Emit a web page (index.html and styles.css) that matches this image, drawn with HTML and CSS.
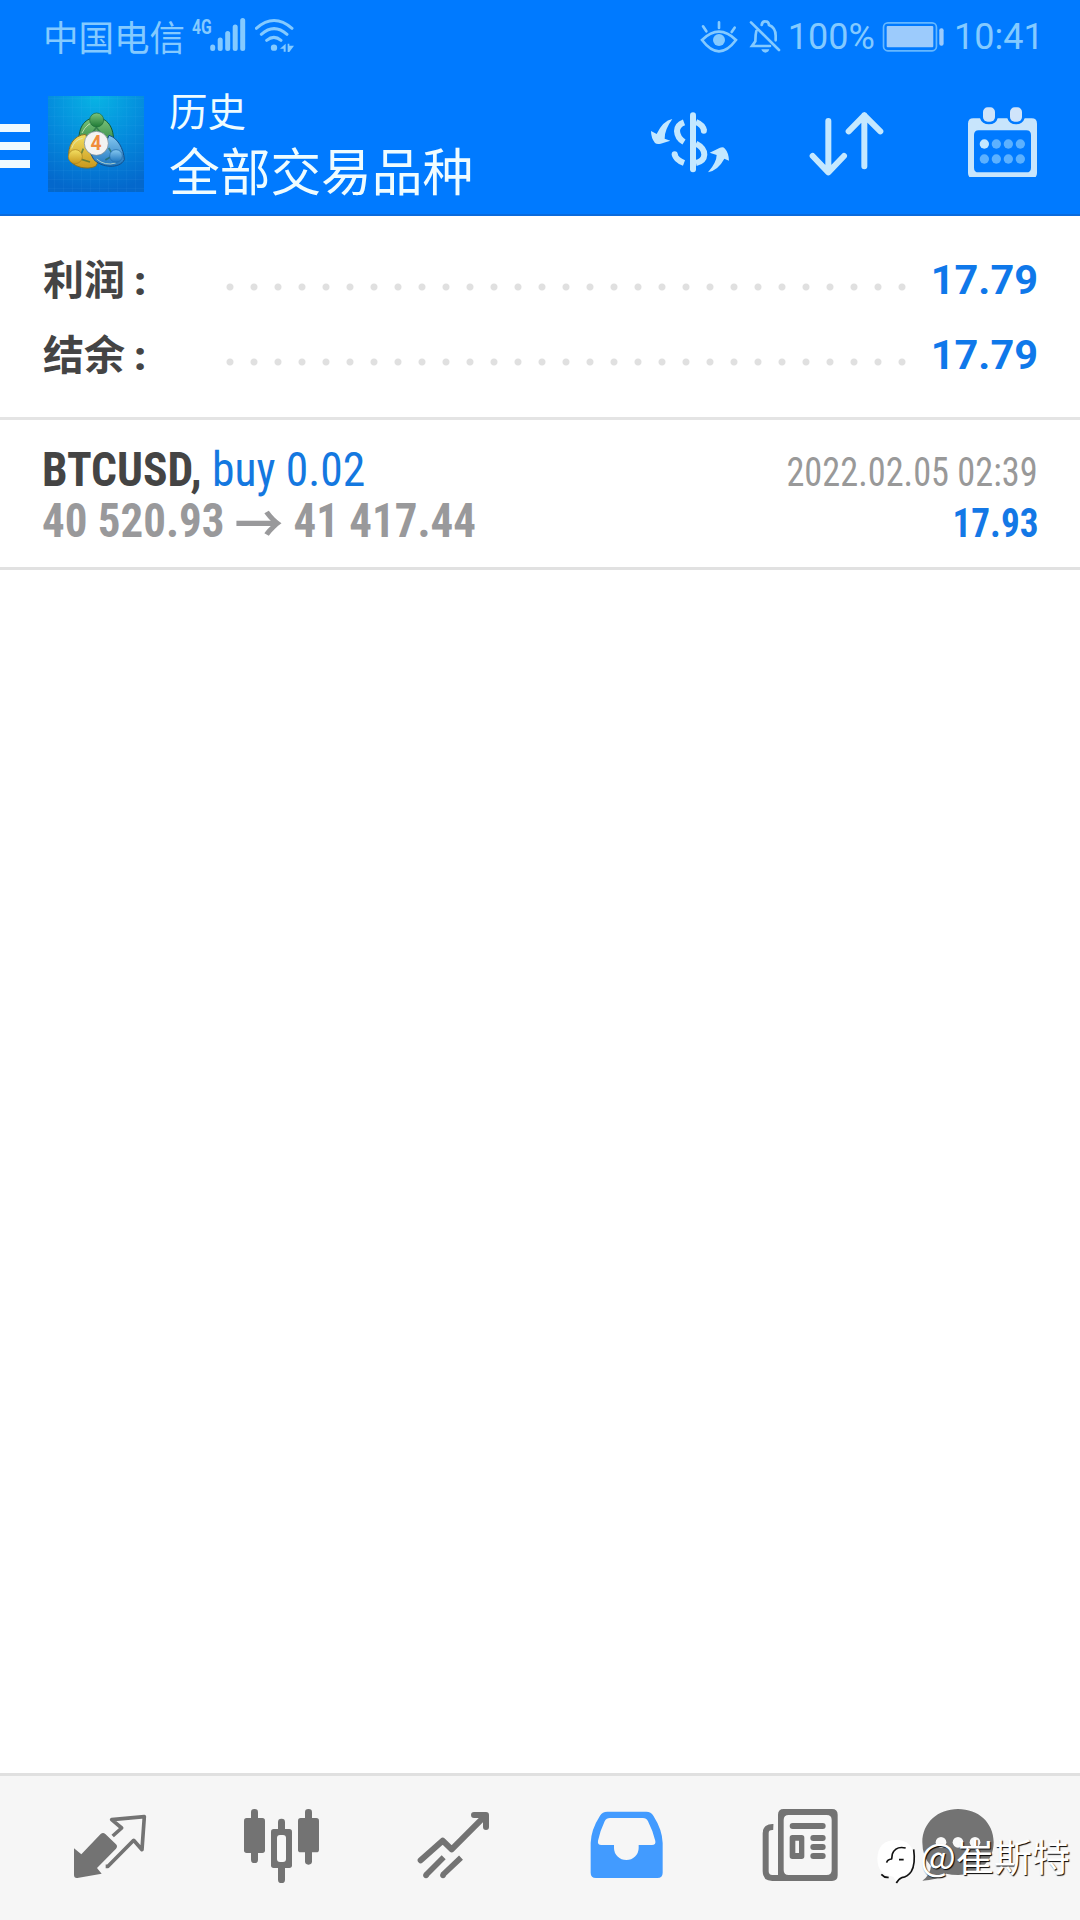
FILE: index.html
```html
<!DOCTYPE html>
<html lang="zh-CN">
<head>
<meta charset="utf-8">
<title>历史</title>
<link rel="stylesheet" href="styles.css">
</head>
<body>
<div class="screen">
  <header class="header">
    <div class="status">
      <div class="status-left">
        <span class="carrier">中国电信</span>
        <span class="network">4G</span>
        <svg class="signal" viewBox="0 0 36 34"><path d="M2.7 29V30.6M10.2 22V30.6M17.7 15.6V30.6M25.2 9V30.6M32.7 2.6V30.6"/></svg>
        <svg class="wifi" viewBox="765 55 120 102"><path class="arcs" d="M769 86Q822 39 876 86M784 104Q822 70 861 104M800 122Q822 104 843 122"/><circle cx="822" cy="144" r="9.5"/><path d="M840 147l17-15v24h-6v-9zM863 132h5l0 6 14 0-14 19h-5z"/></svg>
      </div>
      <div class="status-right">
        <svg class="eye" viewBox="60 60 114 100"><path d="M66 120Q117 70 168 120Q117 188 66 120ZM117 67V84M69 79l10 15M164 83l-9 13"/><circle cx="117" cy="120" r="18"/></svg>
        <svg class="bell" viewBox="208 58 96 102"><path d="M214 68L298 151M246 76Q248 64 257 65Q267 65 268 76Q288 84 288 108V122M230 94Q227 105 227 125L217 139H271"/><path class="clapper" d="M245 149h24q-3 10-12 10t-12-10z"/></svg>
        <span class="percent">100%</span>
        <svg class="battery" viewBox="608 62 190 94"><rect class="case" x="612.5" y="67.500" width="159" height="84" rx="13"/><rect x="622" y="77" width="140" height="64" rx="3"/><rect x="780" y="84" width="13" height="52" rx="6"/></svg>
        <span class="clock">10:41</span>
      </div>
    </div>
    <div class="toolbar">
      <div class="menu"><i></i><i></i><i></i></div>
      <svg class="app-icon" viewBox="144 48 288 288">
        <defs>
          <radialGradient id="bg" cx=".5" cy="0" r="1"><stop offset="0" stop-color="#08b4e4"/><stop offset=".55" stop-color="#0489dc"/><stop offset="1" stop-color="#0468cc"/></radialGradient>
          <linearGradient id="green" x2="0" y2="1"><stop stop-color="#7cc47c"/><stop offset="1" stop-color="#1e7a35"/></linearGradient>
          <linearGradient id="gold" x2="0" y2="1"><stop stop-color="#f3df62"/><stop offset="1" stop-color="#c9981c"/></linearGradient>
          <linearGradient id="blue" x2="0" y2="1"><stop stop-color="#86c8f0"/><stop offset="1" stop-color="#1d74bd"/></linearGradient>
          <pattern id="grid" width="27" height="27" patternUnits="userSpaceOnUse"><path d="M0 .5H27M.5 0V27" stroke="#5cc4f2" stroke-opacity=".25" fill="none"/></pattern>
        </defs>
        <rect x="144" y="48" width="288" height="288" fill="url(#bg)"/>
        <rect x="144" y="48" width="288" height="288" fill="url(#grid)"/>
        <path d="M237 190C233 135 260 113 289 113C320 113 344 140 340 190L312 212L262 204Z" fill="url(#green)" stroke="#145a35" stroke-width="3"/>
        <path d="M257 163C220 166 203 197 206 235C216 260 259 272 287 259L306 225L270 206Z" fill="url(#gold)" stroke="#82702a" stroke-width="3"/>
        <path d="M327 166C352 173 371 205 373 239C359 268 303 263 281 238L270 217L310 207Z" fill="url(#blue)" stroke="#124f8b" stroke-width="3"/>
        <path d="M246 159Q261 128 288 125M215 205Q223 179 248 175M290 237Q315 259 347 249" fill="none" stroke="#e2f1cf" stroke-width="3" opacity=".7"/>
        <path d="M268 172L289 142L312 172M250 206L238 236L270 246M326 204L340 226L316 240" fill="none" stroke="#17603c" stroke-width="5" opacity=".55"/>
        <circle cx="290" cy="120" r="21" fill="url(#green)" stroke="#1b6938" stroke-width="2"/>
        <circle cx="226" cy="230" r="21" fill="url(#gold)" stroke="#a8811f" stroke-width="2"/>
        <circle cx="348" cy="228" r="19" fill="url(#blue)" stroke="#1c66a8" stroke-width="2"/>
        <circle cx="289" cy="190" r="36" fill="#f3f3f1" stroke="#6d8290" stroke-width="2"/>
        <text x="288" y="211" text-anchor="middle" class="app-digit">4</text>
      </svg>
      <div class="titles"><div class="title">历史</div><div class="subtitle">全部交易品种</div></div>
      <div class="actions">
        <svg class="action" viewBox="0 0 360 300"><g transform="translate(0 40)"><g fill="none" stroke="#c4e8ff" stroke-width="18" stroke-linecap="round"><path d="M189 75V237"/><path stroke-linecap="butt" d="M162 96Q141 104 141 122Q142 143 162 155"/><path stroke-linecap="butt" d="M198 95Q220 104 222 121M198 160Q223 173 223 193Q222 213 198 218M162 218Q137 209 134 192"/><path d="M221.500 121v.1M134 192v.1"/></g><path fill="#c4e8ff" d="M127 86Q99 91 80 131L63 122Q63 143 75 158Q81 163 92 160L121 151L104 145Q103 119 127 86ZM234 246Q265 239 283 205L297 211Q296 187 285 175Q280 169 270 172L239 187L260 194Q260 216 234 246Z"/></g></svg>
        <svg class="action" viewBox="470 0 360 300"><path transform="translate(0 40)" fill="none" stroke="#c4e8ff" stroke-width="18" stroke-linecap="round" stroke-linejoin="round" d="M594 92V245M547 197L594 246L641 197M702 228V75M655 123L702 75L750 123"/></svg>
        <svg class="action" viewBox="945 0 360 300"><g transform="translate(0 40)"><path fill="#c8e5fc" fill-rule="evenodd" d="M1030 84H1050Q1056 102 1077 102T1103 84H1132Q1138 102 1158 102T1184 84H1205Q1221 84 1221 100V248Q1221 264 1205 264H1030Q1014 264 1014 248V100Q1014 84 1030 84ZM1046 120Q1032 120 1032 134V232Q1032 246 1046 246H1189Q1203 246 1203 232V134Q1203 120 1189 120Z"/><rect x="1059" y="51" width="36" height="43" rx="14" fill="#d0e4fa"/><rect x="1140" y="51" width="36" height="43" rx="14" fill="#d0e4fa"/><g fill="#5cb1ff"><circle cx="1063" cy="161" r="14" fill="#c4e8ff"/><circle cx="1099" cy="161" r="14"/><circle cx="1135" cy="161" r="14"/><circle cx="1171" cy="161" r="14"/><circle cx="1063" cy="206" r="14"/><circle cx="1099" cy="206" r="14"/><circle cx="1135" cy="206" r="14"/><circle cx="1171" cy="206" r="14"/></g></g></svg>
      </div>
    </div>
  </header>

  <section class="summary">
    <div class="sum-row"><span class="sum-label">利润<b>:</b></span><span class="dots"></span><span class="sum-value">17.79</span></div>
    <div class="sum-row"><span class="sum-label">结余<b>:</b></span><span class="dots"></span><span class="sum-value">17.79</span></div>
  </section>

  <main class="deals">
    <article class="deal">
      <div class="deal-line"><div class="deal-name"><b>BTCUSD,</b> <span>buy 0.02</span></div><time class="deal-time">2022.02.05 02:39</time></div>
      <div class="deal-line"><div class="deal-prices"><span>40 520.93</span><span class="arrow">→</span><span>41 417.44</span></div><div class="deal-profit">17.93</div></div>
    </article>
  </main>

  <nav class="tabs">
    <svg viewBox="0 48 588 432"><path d="M222 265L244 283L302 222Q309 216 316 222L348 253Q354 259 348 266L291 324L305 341L232 354Q222 355 222 345Z"/><path class="line" stroke-width="11" d="M338 228L365 204L335 179L433 170L426 269L401 241L324 319H317"/></svg>
    <svg viewBox="588 48 516 432"><rect x="753" y="147" width="21" height="162" rx="10"/><rect x="732" y="174" width="63" height="105" rx="8"/><rect x="915" y="147" width="21" height="167" rx="10"/><rect x="894" y="174" width="63" height="103" rx="8"/><rect x="834" y="176" width="21" height="193" rx="10"/><rect x="813" y="207" width="63" height="117" rx="8"/><rect class="hole" x="831" y="225" width="27" height="81" rx="9"/></svg>
    <svg viewBox="24 48 516 432"><path class="line round" stroke-width="18" d="M182 301L248 242L275 268L376 167M342 165H378V201"/><path class="line" stroke-width="17" d="M198 345L251 292M248 345L303 293"/><circle cx="198" cy="346" r="8.500"/><circle cx="249" cy="346" r="8.500"/></svg>
    <svg class="active" viewBox="540 48 516 432"><path fill-rule="evenodd" d="M742 155H859Q873 155 880 167Q907 209 908 249V338Q908 354 892 354H708Q692 354 692 338V249Q693 209 720 167Q727 155 742 155ZM750 174Q739 174 734 184Q721 211 714 242Q712 255 724 255H762V264A37 36 0 0 0 836 264V255H876Q888 255 886 243Q878 211 864 184Q859 174 849 174Z"/></svg>
    <svg viewBox="-24 48 516 432"><path class="line" stroke-width="18" d="M160 201Q137 200 137 220V334Q137 354 157 354H180"/><path fill-rule="evenodd" d="M191 147H336Q353 147 353 164V346Q353 363 336 363H155L174 345V164Q174 147 191 147ZM206 165Q191 165 191 180V330Q191 345 206 345H320Q335 345 335 330V180Q335 165 320 165Z"/><rect x="209" y="189" width="108" height="18" rx="9"/><path fill-rule="evenodd" d="M217 225H245Q253 225 253 233V289Q253 297 245 297H217Q209 297 209 289V233Q209 225 217 225ZM226 242V279H237V242Z"/><rect x="271" y="225" width="46" height="18" rx="9"/><rect x="271" y="252" width="46" height="18" rx="9"/><rect x="271" y="279" width="46" height="18" rx="9"/></svg>
    <svg viewBox="492 48 588 432"><path d="M714 147C775 147 821 188 821 247C821 305 775 345 714 345Q694 345 679 341Q650 360 607 362Q631 345 633 318Q607 291 607 247C607 188 654 147 714 147Z"/><g class="hole"><circle cx="663" cy="247" r="16"/><circle cx="714" cy="247" r="16"/><circle cx="765" cy="247" r="16"/></g></svg>
  </nav>

  <div class="watermark">
    <svg viewBox="468 234 126 138"><path fill="#fff" d="M529 240Q580 240 582 295Q580 334 549 348L529 365L520 350Q472 346 472 295Q474 240 529 240Z"/><path fill="none" stroke="#111" stroke-width="5" stroke-linejoin="round" d="M581 268Q587 312 574 334Q564 350 545 353Q536 356 529 369M557 264Q527 257 517 282L515 297Q502 298 500 308M537 299H551M484 343Q494 354 506 352"/></svg>
    <span>@崔斯特</span>
  </div>
</div>
</body>
</html>
```
FILE: styles.css
```css
* { box-sizing: border-box; }
body { margin: 0; background: #fff; font-family: Roboto, "Noto Sans CJK SC", sans-serif; }
svg { display: block; flex: none; }
.screen { position: relative; width: 1080px; height: 1920px; display: flex; flex-direction: column; overflow: hidden; background: #fff; }

.header { height: 216px; background: #007aff; border-bottom: 2px solid #0b6bdc; color: #effcff; }
.status { height: 74px; padding: 0 38px 0 43px; display: flex; justify-content: space-between; color: #84caff; fill: #84caff; }
.status-left, .status-right { display: flex; align-items: flex-start; white-space: nowrap; }
.carrier { width: 149px; font: 400 35.500px/72px "Noto Sans CJK SC", sans-serif; }
.network { width: 18px; margin-top: 18px; font: 700 21px/18px Roboto, sans-serif; transform: scaleX(.75); transform-origin: left; }
.signal { width: 36px; height: 34px; margin-top: 18px; fill: none; stroke: #84caff; stroke-width: 5; stroke-linecap: round; }
.wifi { width: 40px; height: 34px; margin: 18px 0 0 9px; }
.wifi .arcs { fill: none; stroke: #84caff; stroke-width: 9; stroke-linecap: round; }
.eye { width: 38px; height: 33.3px; margin-top: 20px; fill: #84caff; }
.eye path { fill: none; stroke: #84caff; stroke-width: 8; stroke-linecap: round; }
.bell { width: 32px; height: 34px; margin: 19px 0 0 11px; }
.bell path { fill: none; stroke: #84caff; stroke-width: 8; stroke-linecap: round; }
.bell .clapper { fill: #84caff; stroke: none; }
.percent, .clock { font: 400 36px/75px Roboto, sans-serif; }
.percent { width: 94px; margin-left: 7px; }
.battery { width: 63.300px; height: 31.300px; margin-top: 20.700px; fill: #9ccbfc; }
.battery .case { fill: none; stroke: #66b8ff; stroke-width: 5; }
.clock { width: 88px; margin-left: 9px; }

.toolbar { display: flex; height: 140px; }
.toolbar > * { flex: none; }
.menu { width: 30px; margin-right: 18px; padding-top: 50px; display: flex; flex-direction: column; gap: 10px; }
.menu i { height: 8px; background: #effaff; }
.app-icon { width: 96px; height: 96px; margin-top: 22px; }
.app-digit { font: 700 58px Roboto, sans-serif; fill: #f08c3c; }
.titles { margin-left: 25px; width: 439px; font-family: "Noto Sans CJK SC", sans-serif; font-weight: 400; white-space: nowrap; }
.title { font-size: 38.500px; line-height: 50px; margin-top: 10px; }
.subtitle { font-size: 50.700px; line-height: 60px; margin-top: 5px; }
.actions { display: flex; gap: 37.300px; margin-left: 22px; }
.action { width: 120px; height: 100px; margin-top: 2.700px; }

.summary { height: 204px; padding: 26px 43px 0; border-bottom: 3px solid #e4e4e4; }
.sum-row { height: 75px; display: flex; align-items: center; }
.sum-label { width: 183px; font: 700 41px/75px "Noto Sans CJK SC", sans-serif; color: #444; }
.sum-label b { font-family: Roboto, sans-serif; margin-left: 9px; }
.dots { width: 680px; height: 8px; margin-top: 14px; background: radial-gradient(circle at 4px 4px, #e0e0e0 3px, transparent 4px) 0 0 / 24px 8px; }
.sum-value { flex: 1; margin-right: -1px; text-align: right; font: 700 41.500px/75px Roboto, sans-serif; color: #0f78ea; }

.deals { flex: 1; }
.deal { height: 150px; padding: 24px 42px 0; border-bottom: 3px solid #e1e1e1; }
.deal-line { height: 51px; display: flex; justify-content: space-between; align-items: baseline; font-stretch: 75%; white-space: nowrap; font-family: Roboto, sans-serif; line-height: 51px; }
.deal-name { font-size: 48px; color: #444; transform: scaleX(.948); transform-origin: left; }
.deal-name span { color: #1478e0; }
.deal-time { font-size: 40px; color: #999; transform: scaleX(.908); transform-origin: right; }
.deal-prices { display: flex; font-size: 48px; font-weight: 700; color: #99999b; transform: scaleX(.937); transform-origin: left; }
.deal-prices .arrow { width: 73.500px; text-align: center; font-family: "Noto Sans CJK SC", sans-serif; font-size: 52px; font-weight: 700; }
.deal-profit { font-size: 40px; font-weight: 700; color: #1478e6; transform: scaleX(.93); transform-origin: right; }

.tabs { height: 147px; display: grid; grid-template-columns: 196px 172px 172px 172px 172px 196px; background: #f6f6f6; border-top: 3px solid #e0e0e0; fill: #737373; }
.tabs svg { width: 100%; height: 144px; }
.tabs .line { fill: none; stroke: #737373; stroke-linejoin: round; }
.tabs .round { stroke-linecap: round; }
.tabs .hole { fill: #f8f8f8; }
.tabs .active { fill: #429bff; }

.watermark { position: absolute; left: 876px; top: 1838px; display: flex; align-items: center; height: 46px; color: #fff; font: 400 38px/46px "Noto Sans CJK SC", sans-serif; white-space: nowrap; text-shadow: 1px 1px 1px #000; }
.watermark svg { width: 42px; height: 46px; margin-right: 2px; }
.watermark span { margin-top: -13px; }
```
